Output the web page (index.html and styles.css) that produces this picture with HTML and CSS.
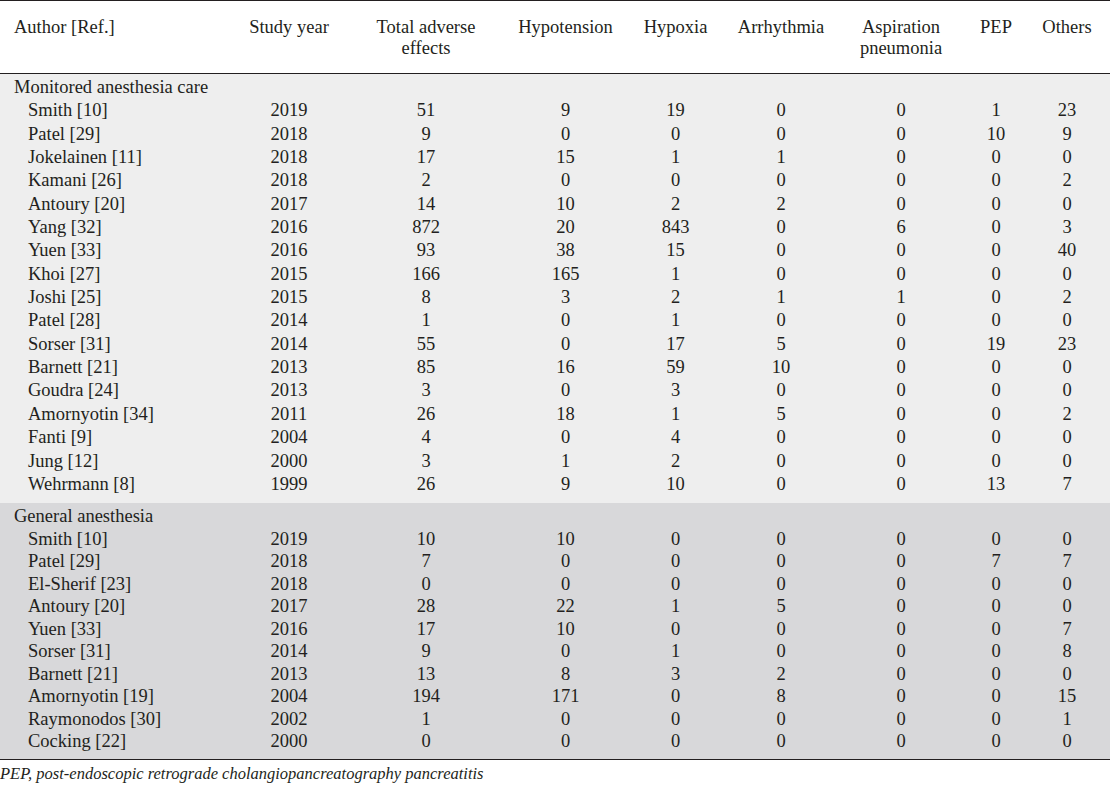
FILE: index.html
```html
<!DOCTYPE html>
<html>
<head>
<meta charset="utf-8">
<link rel="stylesheet" href="styles.css">
</head>
<body>
<table class="data">
  <colgroup>
    <col class="c-author"><col class="c-year"><col class="c-total"><col class="c-hypot"><col class="c-hypox"><col class="c-arrh"><col class="c-asp"><col class="c-pep"><col class="c-oth">
  </colgroup>
  <thead>
    <tr>
      <th class="left">Author [Ref.]</th>
      <th>Study year</th>
      <th>Total adverse<br>effects</th>
      <th>Hypotension</th>
      <th>Hypoxia</th>
      <th>Arrhythmia</th>
      <th>Aspiration<br>pneumonia</th>
      <th>PEP</th>
      <th>Others</th>
    </tr>
  </thead>
  <tbody class="g1">
    <tr class="first"><td class="group" colspan="9">Monitored anesthesia care</td></tr>
    <tr><td class="name">Smith [10]</td><td>2019</td><td>51</td><td>9</td><td>19</td><td>0</td><td>0</td><td>1</td><td>23</td></tr>
    <tr><td class="name">Patel [29]</td><td>2018</td><td>9</td><td>0</td><td>0</td><td>0</td><td>0</td><td>10</td><td>9</td></tr>
    <tr><td class="name">Jokelainen [11]</td><td>2018</td><td>17</td><td>15</td><td>1</td><td>1</td><td>0</td><td>0</td><td>0</td></tr>
    <tr><td class="name">Kamani [26]</td><td>2018</td><td>2</td><td>0</td><td>0</td><td>0</td><td>0</td><td>0</td><td>2</td></tr>
    <tr><td class="name">Antoury [20]</td><td>2017</td><td>14</td><td>10</td><td>2</td><td>2</td><td>0</td><td>0</td><td>0</td></tr>
    <tr><td class="name">Yang [32]</td><td>2016</td><td>872</td><td>20</td><td>843</td><td>0</td><td>6</td><td>0</td><td>3</td></tr>
    <tr><td class="name">Yuen [33]</td><td>2016</td><td>93</td><td>38</td><td>15</td><td>0</td><td>0</td><td>0</td><td>40</td></tr>
    <tr><td class="name">Khoi [27]</td><td>2015</td><td>166</td><td>165</td><td>1</td><td>0</td><td>0</td><td>0</td><td>0</td></tr>
    <tr><td class="name">Joshi [25]</td><td>2015</td><td>8</td><td>3</td><td>2</td><td>1</td><td>1</td><td>0</td><td>2</td></tr>
    <tr><td class="name">Patel [28]</td><td>2014</td><td>1</td><td>0</td><td>1</td><td>0</td><td>0</td><td>0</td><td>0</td></tr>
    <tr><td class="name">Sorser [31]</td><td>2014</td><td>55</td><td>0</td><td>17</td><td>5</td><td>0</td><td>19</td><td>23</td></tr>
    <tr><td class="name">Barnett [21]</td><td>2013</td><td>85</td><td>16</td><td>59</td><td>10</td><td>0</td><td>0</td><td>0</td></tr>
    <tr><td class="name">Goudra [24]</td><td>2013</td><td>3</td><td>0</td><td>3</td><td>0</td><td>0</td><td>0</td><td>0</td></tr>
    <tr><td class="name">Amornyotin [34]</td><td>2011</td><td>26</td><td>18</td><td>1</td><td>5</td><td>0</td><td>0</td><td>2</td></tr>
    <tr><td class="name">Fanti [9]</td><td>2004</td><td>4</td><td>0</td><td>4</td><td>0</td><td>0</td><td>0</td><td>0</td></tr>
    <tr><td class="name">Jung [12]</td><td>2000</td><td>3</td><td>1</td><td>2</td><td>0</td><td>0</td><td>0</td><td>0</td></tr>
    <tr class="last"><td class="name">Wehrmann [8]</td><td>1999</td><td>26</td><td>9</td><td>10</td><td>0</td><td>0</td><td>13</td><td>7</td></tr>
  </tbody>
  <tbody class="g2">
    <tr class="first"><td class="group" colspan="9">General anesthesia</td></tr>
    <tr><td class="name">Smith [10]</td><td>2019</td><td>10</td><td>10</td><td>0</td><td>0</td><td>0</td><td>0</td><td>0</td></tr>
    <tr><td class="name">Patel [29]</td><td>2018</td><td>7</td><td>0</td><td>0</td><td>0</td><td>0</td><td>7</td><td>7</td></tr>
    <tr><td class="name">El-Sherif [23]</td><td>2018</td><td>0</td><td>0</td><td>0</td><td>0</td><td>0</td><td>0</td><td>0</td></tr>
    <tr><td class="name">Antoury [20]</td><td>2017</td><td>28</td><td>22</td><td>1</td><td>5</td><td>0</td><td>0</td><td>0</td></tr>
    <tr><td class="name">Yuen [33]</td><td>2016</td><td>17</td><td>10</td><td>0</td><td>0</td><td>0</td><td>0</td><td>7</td></tr>
    <tr><td class="name">Sorser [31]</td><td>2014</td><td>9</td><td>0</td><td>1</td><td>0</td><td>0</td><td>0</td><td>8</td></tr>
    <tr><td class="name">Barnett [21]</td><td>2013</td><td>13</td><td>8</td><td>3</td><td>2</td><td>0</td><td>0</td><td>0</td></tr>
    <tr><td class="name">Amornyotin [19]</td><td>2004</td><td>194</td><td>171</td><td>0</td><td>8</td><td>0</td><td>0</td><td>15</td></tr>
    <tr><td class="name">Raymonodos [30]</td><td>2002</td><td>1</td><td>0</td><td>0</td><td>0</td><td>0</td><td>0</td><td>1</td></tr>
    <tr class="last"><td class="name">Cocking [22]</td><td>2000</td><td>0</td><td>0</td><td>0</td><td>0</td><td>0</td><td>0</td><td>0</td></tr>
  </tbody>
</table>
<p class="note">PEP, post-endoscopic retrograde cholangiopancreatography pancreatitis</p>
</body>
</html>
```
FILE: styles.css
```css
html, body {
  margin: 0;
  padding: 0;
  background: #ffffff;
}
body {
  font-family: "Liberation Serif", "Times New Roman", serif;
  font-size: 18.5px;
  color: #231f20;
  width: 1110px;
}
.data {
  width: 1110px;
  table-layout: fixed;
  border-collapse: collapse;
  border-top: 1px solid #231f20;
  border-bottom: 1px solid #231f20;
}
.c-author { width: 234px; }
.c-year { width: 110px; }
.c-total { width: 164px; }
.c-hypot { width: 115px; }
.c-hypox { width: 105px; }
.c-arrh { width: 106px; }
.c-asp { width: 134px; }
.c-pep { width: 56px; }
.c-oth { width: 86px; }

.data th {
  font-weight: normal;
  text-align: center;
  vertical-align: top;
  line-height: 21px;
  padding: 16px 0 14px 0;
  height: 42px;
  border-bottom: 1px solid #231f20;
  white-space: nowrap;
}
.data th.left {
  text-align: left;
  padding-left: 14px;
}
.data td {
  padding: 0;
  text-align: center;
  white-space: nowrap;
}
.g1 td { line-height: 23.35px; }
.g2 td { line-height: 22.5px; }
.g1 { background: #eeeeee; }
.g2 { background: #d8d8da; }
.data td.group {
  text-align: left;
  padding-left: 14px;
}
.data td.name {
  text-align: left;
  padding-left: 28px;
}
.g1 tr.first td { padding-top: 2px; }
.g1 tr.last td { padding-bottom: 6.7px; }
.g2 tr.first td { padding-top: 2.5px; }
.g2 tr.last td { padding-bottom: 6.5px; }
.note {
  margin: 0;
  padding-top: 3px;
  font-style: italic;
  font-size: 16.5px;
  line-height: 21px;
}
```
